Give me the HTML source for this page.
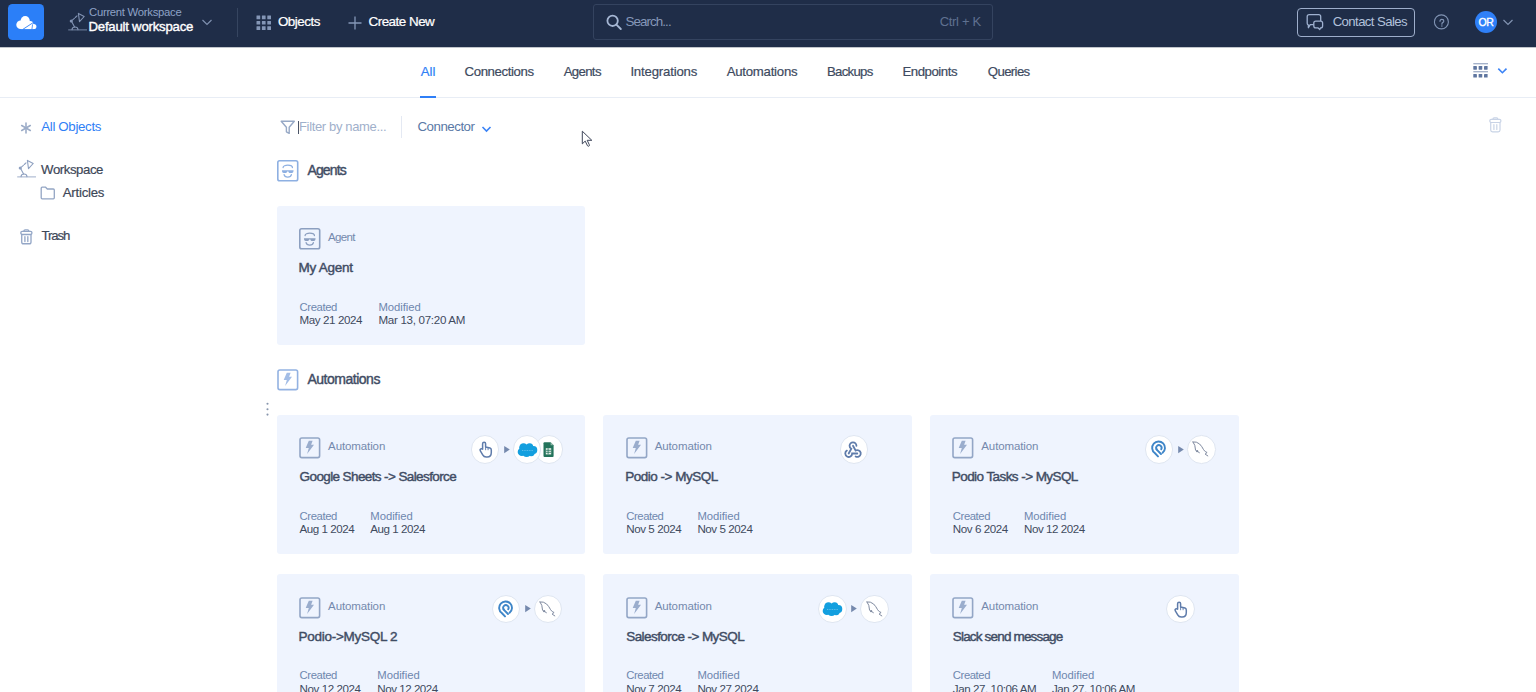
<!DOCTYPE html>
<html><head><meta charset="utf-8"><style>
html,body{margin:0;padding:0;}
body{width:1536px;height:692px;overflow:hidden;position:relative;background:#fff;font-family:"Liberation Sans", sans-serif;}
.a{position:absolute;box-sizing:border-box;}
svg.a{overflow:visible}
.t{position:absolute;white-space:pre;}
#top{position:absolute;left:0;top:0;width:1536px;height:47px;background:#1f2d48;}
</style></head><body>
<div id="top"></div><div class="a" style="left:0;top:47px;width:1536px;height:1px;background:rgba(31,45,72,0.28)"></div>
<div class="a" style="left:8px;top:4px;width:36px;height:36px;border-radius:4.5px;background:#2b7ff8"></div>
<svg class="a" style="left:8px;top:4px;" width="36" height="36" viewBox="0 0 36 36"><g fill="#fff"><circle cx="12.6" cy="20.7" r="4.3"/><circle cx="17.2" cy="16.7" r="4.6"/><circle cx="22" cy="20.3" r="3.3"/><circle cx="25.8" cy="22.5" r="2.6"/><rect x="12.6" y="20" width="13.2" height="5.1"/></g>
<path d="M14.8 25.4 L25.2 18.6" stroke="#2b7ff8" stroke-width="0.9"/><path d="M24.6 20.3 L23.9 25.4" stroke="#2b7ff8" stroke-width="0.8"/></svg>
<svg class="a" style="left:64px;top:8px;transform:scale(1.0);transform-origin:0 0" width="24" height="24" viewBox="0 0 24 24"><g fill="none" stroke="#8293b3" stroke-width="1.1" stroke-linecap="round" stroke-linejoin="round">
<path d="M4.6 21.9 H22.6" stroke-width="0.85"/><path d="M8 21.6 Q8.2 19 11 19 Q13.8 19 14 21.6"/><path d="M10.6 19 L7.6 13.6"/><path d="M8.6 11.9 L10.4 10.3 M11.3 9.5 L13 7.9"/>
<path d="M14.4 5.4 L20.2 8.5 L15.5 13.7 Z"/></g><circle cx="7.3" cy="13" r="1.6" fill="#8293b3"/></svg>
<svg class="a" style="left:201px;top:18px;" width="12" height="9" viewBox="0 0 12 9"><path d="M1.5 2 L6 6.5 L10.5 2" fill="none" stroke="#7f90af" stroke-width="1.2"/></svg>
<div class="a" style="left:237px;top:8px;width:1px;height:29px;background:#364560"></div>
<svg class="a" style="left:255.6px;top:14.6px;" width="15" height="15" viewBox="0 0 15 15"><rect x="0.5" y="0.5" width="3.7" height="3.7" rx="0.3" fill="#8496b6"/><rect x="0.5" y="5.9" width="3.7" height="3.7" rx="0.3" fill="#8496b6"/><rect x="0.5" y="11.3" width="3.7" height="3.7" rx="0.3" fill="#8496b6"/><rect x="5.9" y="0.5" width="3.7" height="3.7" rx="0.3" fill="#8496b6"/><rect x="5.9" y="5.9" width="3.7" height="3.7" rx="0.3" fill="#8496b6"/><rect x="5.9" y="11.3" width="3.7" height="3.7" rx="0.3" fill="#8496b6"/><rect x="11.3" y="0.5" width="3.7" height="3.7" rx="0.3" fill="#8496b6"/><rect x="11.3" y="5.9" width="3.7" height="3.7" rx="0.3" fill="#8496b6"/><rect x="11.3" y="11.3" width="3.7" height="3.7" rx="0.3" fill="#8496b6"/></svg>
<svg class="a" style="left:347.5px;top:15.5px;" width="14" height="14" viewBox="0 0 14 14"><path d="M7 0.5 V13.5 M0.5 7 H13.5" stroke="#8597b7" stroke-width="1.3"/></svg>
<div class="a" style="left:593px;top:4px;width:400px;height:36px;border:1px solid #34435f;border-radius:3px"></div>
<svg class="a" style="left:606px;top:14px;" width="16" height="16" viewBox="0 0 16 16"><circle cx="6.6" cy="6.8" r="5.2" fill="none" stroke="#a6b7d4" stroke-width="1.8"/><path d="M10.4 10.6 L14.8 15" stroke="#a6b7d4" stroke-width="1.9" stroke-linecap="round"/></svg>
<div class="a" style="left:1297px;top:8px;width:118px;height:29px;border:1px solid #9eaecb;border-radius:4px"></div>
<svg class="a" style="left:1302px;top:10px;" width="26" height="24" viewBox="0 0 26 24"><g fill="none" stroke="#9fb1d0" stroke-width="1.3" stroke-linejoin="round">
<path d="M11.8 14.6 H8.2 L6.4 17.8 L6.3 14.8 Q5.2 14.6 5.2 13.2 V6.6 Q5.2 4.6 7.2 4.6 H16.7 Q18.7 4.6 18.7 6.6 V11.1"/>
<path d="M13.8 11.1 H18.6 Q20.6 11.1 20.6 13.1 V15.9 Q20.6 17.8 18.6 17.8 L17.8 19.6 L15.8 17.8 H13.8 Q11.8 17.8 11.8 15.9 V13.1 Q11.8 11.1 13.8 11.1 Z"/></g></svg>
<svg class="a" style="left:1433px;top:14px;" width="17" height="17" viewBox="0 0 17 17"><circle cx="8.4" cy="7.9" r="7" fill="none" stroke="#8194b4" stroke-width="1.1"/><path d="M7 7.3 Q7 5.3 8.9 5.3 Q10.8 5.3 10.8 7 Q10.8 8.1 9.7 8.6 Q8.9 9 8.9 9.9 V10.2" fill="none" stroke="#8194b4" stroke-width="1.2" stroke-linecap="round"/><circle cx="8.9" cy="11.9" r="0.75" fill="#8194b4"/></svg>
<div class="a" style="left:1475px;top:11px;width:22px;height:22px;border-radius:50%;background:#2f80f8"></div>
<div class="t" style="left:1475px;top:11px;width:22px;height:22px;line-height:22px;text-align:center;font-size:10.5px;font-weight:400;color:#fff;letter-spacing:-0.4px;-webkit-text-stroke:0.35px #fff">OR</div>
<svg class="a" style="left:1502px;top:18px;" width="12" height="9" viewBox="0 0 12 9"><path d="M1.5 2 L6 6.5 L10.5 2" fill="none" stroke="#8293b2" stroke-width="1.2"/></svg>
<div class="a" style="left:0;top:97px;width:1536px;height:1px;background:#e8edf5"></div>
<div class="a" style="left:420px;top:96.3px;width:16px;height:2px;background:#2f7ff7"></div>
<svg class="a" style="left:1473px;top:63px;" width="16" height="16" viewBox="0 0 16 16"><g fill="#5f76a0"><rect x="0.30" y="3.1" width="3.6" height="3.6" rx="0.4"/><rect x="0.30" y="11" width="3.6" height="3.6" rx="0.4"/><rect x="5.65" y="3.1" width="3.6" height="3.6" rx="0.4"/><rect x="5.65" y="11" width="3.6" height="3.6" rx="0.4"/><rect x="11.00" y="3.1" width="3.6" height="3.6" rx="0.4"/><rect x="11.00" y="11" width="3.6" height="3.6" rx="0.4"/></g><rect x="0.3" y="0.2" width="14.7" height="1.1" fill="#8fa0bd"/><rect x="0.3" y="8.2" width="14.7" height="1.1" fill="#8fa0bd"/></svg>
<svg class="a" style="left:1497px;top:67px;" width="11" height="8" viewBox="0 0 11 8"><path d="M1.3 1.6 L5.4 5.7 L9.5 1.6" fill="none" stroke="#3b83f6" stroke-width="1.6"/></svg>
<svg class="a" style="left:1488.6px;top:116.8px;" width="14" height="17" viewBox="0 0 14 17"><g fill="none" stroke="#c8d3e6" stroke-width="1.3" stroke-linejoin="round" stroke-linecap="round" transform="scale(0.91 0.93)">
<path d="M4.3 2.3 Q4.3 0.9 5.7 0.9 H8.3 Q9.7 0.9 9.7 2.3"/><rect x="0.9" y="2.5" width="12.2" height="3.4" rx="1.5"/>
<path d="M1.9 6 V13.9 Q1.9 15.9 3.9 15.9 H10.1 Q12.1 15.9 12.1 13.9 V6"/><path d="M5.4 8.3 V13.4 M8.6 8.3 V13.4"/></g></svg>
<svg class="a" style="left:20px;top:121.5px;" width="12" height="12" viewBox="0 0 12 12"><g stroke="#9dadc8" stroke-width="1.6" stroke-linecap="round"><path d="M6 1 V11"/><path d="M1.7 3.5 L10.3 8.5"/><path d="M1.7 8.5 L10.3 3.5"/></g></svg>
<svg class="a" style="left:12.6px;top:155.3px;transform:scale(1.0);transform-origin:0 0" width="24" height="24" viewBox="0 0 24 24"><g fill="none" stroke="#8ea0c0" stroke-width="1.1" stroke-linecap="round" stroke-linejoin="round">
<path d="M4.6 21.9 H22.6" stroke-width="0.85"/><path d="M8 21.6 Q8.2 19 11 19 Q13.8 19 14 21.6"/><path d="M10.6 19 L7.6 13.6"/><path d="M8.6 11.9 L10.4 10.3 M11.3 9.5 L13 7.9"/>
<path d="M14.4 5.4 L20.2 8.5 L15.5 13.7 Z"/></g><circle cx="7.3" cy="13" r="1.6" fill="#8ea0c0"/></svg>
<svg class="a" style="left:40px;top:186px;" width="16" height="14" viewBox="0 0 16 14"><path d="M1.2 2.2 Q1.2 1.2 2.2 1.2 H5.6 L7.3 3 H13.3 Q14.3 3 14.3 4 V11.8 Q14.3 12.8 13.3 12.8 H2.2 Q1.2 12.8 1.2 11.8 Z" fill="none" stroke="#93a5c4" stroke-width="1.3" stroke-linejoin="round"/></svg>
<svg class="a" style="left:19.8px;top:228.7px;" width="14" height="17" viewBox="0 0 14 17"><g fill="none" stroke="#93a6c6" stroke-width="1.45" stroke-linejoin="round" stroke-linecap="round" transform="scale(0.91 0.93)">
<path d="M4.3 2.3 Q4.3 0.9 5.7 0.9 H8.3 Q9.7 0.9 9.7 2.3"/><rect x="0.9" y="2.5" width="12.2" height="3.4" rx="1.5"/>
<path d="M1.9 6 V13.9 Q1.9 15.9 3.9 15.9 H10.1 Q12.1 15.9 12.1 13.9 V6"/><path d="M5.4 8.3 V13.4 M8.6 8.3 V13.4"/></g></svg>
<svg class="a" style="left:279.5px;top:120px;" width="16" height="15" viewBox="0 0 16 15"><path d="M1.2 1.2 H14.3 L9.2 7.2 V13.4 L6.4 11.8 V7.2 Z" fill="none" stroke="#97a9c6" stroke-width="1.4" stroke-linejoin="round"/></svg>
<div class="a" style="left:298.3px;top:121px;width:1.2px;height:13px;background:#4a5467"></div>
<div class="a" style="left:400.6px;top:116px;width:1px;height:22px;background:#e4e9f3"></div>
<svg class="a" style="left:481px;top:124.5px;" width="11" height="9" viewBox="0 0 11 9"><path d="M1.5 2 L5.5 6 L9.5 2" fill="none" stroke="#3b83f6" stroke-width="1.6"/></svg>
<svg class="a" style="left:581px;top:129.5px;" width="14" height="18" viewBox="0 0 14 18"><path d="M1.3 1.2 V13.9 L4.2 11.1 L6.5 15.8 Q7.3 16.6 8.1 16 Q8.7 15.5 8.3 14.7 L6.2 10.3 L10.8 10.3 Z" fill="#fff" stroke="#3e4559" stroke-width="1" stroke-linejoin="round"/></svg>
<svg class="a" style="left:265.5px;top:402px;" width="3" height="14" viewBox="0 0 3 14"><g fill="#8896ad"><circle cx="1.5" cy="1.7" r="1.05"/><circle cx="1.5" cy="7.2" r="1.05"/><circle cx="1.5" cy="12.6" r="1.05"/></g></svg>
<svg class="a" style="left:276.8px;top:160.2px;" width="22" height="22" viewBox="0 0 22 22"><rect x="0.8" y="0.8" width="19.9" height="19.9" rx="1.8" fill="none" stroke="#8eb0e2" stroke-width="1.6"/>
<g fill="none" stroke="#8eb0e2" stroke-width="1.3" stroke-linecap="round"><path d="M6.1 7.6 C6.1 4.3 15.4 4.3 15.4 7.6"/><path d="M7.1 14.7 Q7.6 17.2 10.75 17.2 Q13.9 17.2 14.4 14.7"/></g>
<path d="M4.9 10.2 H16.6 L16.3 12 Q15.9 13.1 14.7 13.1 H12.7 Q11.8 13.1 11.4 11.6 H10.1 Q9.7 13.1 8.8 13.1 H6.8 Q5.6 13.1 5.2 12 Z" fill="#8eb0e2"/></svg>
<svg class="a" style="left:276.8px;top:368.6px;" width="22" height="22" viewBox="0 0 22 22"><rect x="1.0" y="1.0" width="19.6" height="19.6" rx="1.8" fill="none" stroke="#93b2e2" stroke-width="1.6"/>
<path d="M9.8 3.8 H13.6 L12.1 7.7 H15 L8.1 17 L9.8 11 H6.7 Z" fill="#a3bde6"/></svg>
<div class="a" style="left:276.6px;top:205.6px;width:308.8px;height:139.6px;border-radius:3px;background:#eff4fe"></div>
<svg class="a" style="left:299.20000000000005px;top:228.2px;" width="22" height="22" viewBox="0 0 22 22"><rect x="0.8" y="0.8" width="19.9" height="19.9" rx="1.8" fill="none" stroke="#8c9fc0" stroke-width="1.6"/>
<g fill="none" stroke="#8c9fc0" stroke-width="1.3" stroke-linecap="round"><path d="M6.1 7.6 C6.1 4.3 15.4 4.3 15.4 7.6"/><path d="M7.1 14.7 Q7.6 17.2 10.75 17.2 Q13.9 17.2 14.4 14.7"/></g>
<path d="M4.9 10.2 H16.6 L16.3 12 Q15.9 13.1 14.7 13.1 H12.7 Q11.8 13.1 11.4 11.6 H10.1 Q9.7 13.1 8.8 13.1 H6.8 Q5.6 13.1 5.2 12 Z" fill="#8c9fc0"/></svg>
<div class="a" style="left:276.6px;top:414.6px;width:308.8px;height:139.6px;border-radius:3px;background:#eff4fe"></div>
<svg class="a" style="left:299.20000000000005px;top:437.20000000000005px;" width="22" height="22" viewBox="0 0 22 22"><rect x="1.0" y="1.0" width="19.6" height="19.6" rx="1.8" fill="none" stroke="#93a6c6" stroke-width="1.6"/>
<path d="M9.8 3.8 H13.6 L12.1 7.7 H15 L8.1 17 L9.8 11 H6.7 Z" fill="#9aadcd"/></svg>
<div class="a" style="left:534.5px;top:435.0px;width:28.6px;height:28.6px;border-radius:50%;background:#fff;border:1px solid #dfe6f1"></div><svg class="a" style="left:543.0000000000001px;top:441.5px;" width="11" height="16" viewBox="0 0 11 16"><path d="M0.5 1.3 Q0.5 0.3 1.5 0.3 H7.6 L10.6 3.3 V14.1 Q10.6 15.1 9.6 15.1 H1.5 Q0.5 15.1 0.5 14.1 Z" fill="#23735b"/><path d="M7.6 0.3 V3.3 H10.6 Z" fill="#8fb8a9"/>
<rect x="2.8" y="6.2" width="5.4" height="6.2" fill="#e8f0ec"/><path d="M2.8 8.3 H8.2 M2.8 10.3 H8.2 M5.1 6.2 V12.4" stroke="#23735b" stroke-width="0.8"/></svg>
<div class="a" style="left:512.5px;top:435.0px;width:28.6px;height:28.6px;border-radius:50%;background:#fff;border:1px solid #dfe6f1"></div><svg class="a" style="left:517.0000000000001px;top:441.8px;" width="21" height="15" viewBox="0 0 21 15"><g fill="#139fdf"><circle cx="6.5" cy="5.5" r="4.3"/><circle cx="12.6" cy="4.9" r="3.6"/><circle cx="16.4" cy="8" r="3.9"/><circle cx="4.9" cy="9.9" r="4.2"/><circle cx="9.6" cy="11" r="3.9"/><circle cx="14.2" cy="10.6" r="3.6"/></g><path d="M5 8.6 H16" stroke="#fff" stroke-width="0.6" stroke-dasharray="1 0.7" opacity="0.6"/></svg>
<svg class="a" style="left:503.9000000000001px;top:445.7px;" width="6" height="7.2" viewBox="0 0 6 7.2"><path d="M0.2 0 L5.8 3.6 L0.2 7.2 Z" fill="#7589ad"/></svg>
<div class="a" style="left:470.8px;top:435.0px;width:28.6px;height:28.6px;border-radius:50%;background:#fff;border:1px solid #dfe6f1"></div><svg class="a" style="left:477.6000000000001px;top:441.3px;" width="16" height="16" viewBox="0 0 16 16"><path d="M4.6 8.2 V2.8 Q4.6 1.3 6.1 1.3 Q7.6 1.3 7.6 2.8 V6 L12 7 Q13.3 7.4 13.3 9 V11.5 Q13.3 16 9.2 16 H8.2 Q5.9 16 4.7 13.8 L2.2 9.7 Q1.7 8.5 2.7 8 Q3.7 7.6 4.6 8.2 Z" fill="none" stroke="#5f7cab" stroke-width="1.5" stroke-linejoin="round"/><path d="M7.6 6 V9.2 M10.1 6.6 V9.2" stroke="#5f7cab" stroke-width="0.9"/></svg>
<div class="a" style="left:603.2px;top:414.6px;width:308.8px;height:139.6px;border-radius:3px;background:#eff4fe"></div>
<svg class="a" style="left:625.8000000000001px;top:437.20000000000005px;" width="22" height="22" viewBox="0 0 22 22"><rect x="1.0" y="1.0" width="19.6" height="19.6" rx="1.8" fill="none" stroke="#93a6c6" stroke-width="1.6"/>
<path d="M9.8 3.8 H13.6 L12.1 7.7 H15 L8.1 17 L9.8 11 H6.7 Z" fill="#9aadcd"/></svg>
<div class="a" style="left:839.6px;top:435.0px;width:28.6px;height:28.6px;border-radius:50%;background:#fff;border:1px solid #dfe6f1"></div><svg class="a" style="left:844.4px;top:440.3px;" width="18" height="18" viewBox="0 0 18 18"><g fill="none" stroke="#5f7cab" stroke-width="2.1" stroke-linecap="round" transform="translate(9 9.2) scale(0.86) translate(-12 -12)">
<path d="M4.876 13.61a4 4 0 1 0 6.124 3.39h6"/><path d="M15.066 20.502a4 4 0 1 0 1.934 -7.502c-.706 0 -1.424 .179 -2 .5l-3 -5.5"/><path d="M16 8a4 4 0 1 0 -8 0c0 1.506 .77 2.818 2 3.5l-3 5.5"/></g></svg>
<div class="a" style="left:929.8px;top:414.6px;width:308.8px;height:139.6px;border-radius:3px;background:#eff4fe"></div>
<svg class="a" style="left:952.4px;top:437.20000000000005px;" width="22" height="22" viewBox="0 0 22 22"><rect x="1.0" y="1.0" width="19.6" height="19.6" rx="1.8" fill="none" stroke="#93a6c6" stroke-width="1.6"/>
<path d="M9.8 3.8 H13.6 L12.1 7.7 H15 L8.1 17 L9.8 11 H6.7 Z" fill="#9aadcd"/></svg>
<div class="a" style="left:1187.0px;top:435.0px;width:28.6px;height:28.6px;border-radius:50%;background:#fff;border:1px solid #dfe6f1"></div><svg class="a" style="left:1192.3px;top:440.3px;" width="18" height="18" viewBox="0 0 18 18"><g fill="none" stroke="#7f8aa0" stroke-width="1" stroke-linecap="round" stroke-linejoin="round">
<path d="M1 1.9 Q4.5 1.3 7.6 4 Q10 6.5 11.6 9.7 Q13 12 15.1 12.5 L13.1 14.1 L15.8 15.9"/><path d="M1 1.9 Q3.4 4.5 3.6 10.2"/><path d="M5.1 11.2 L7.4 12.7"/></g><circle cx="5.1" cy="11.2" r="1.15" fill="#7f8aa0"/></svg>
<svg class="a" style="left:1178.0px;top:445.7px;" width="6" height="7.2" viewBox="0 0 6 7.2"><path d="M0.2 0 L5.8 3.6 L0.2 7.2 Z" fill="#7589ad"/></svg>
<div class="a" style="left:1144.9px;top:435.0px;width:28.6px;height:28.6px;border-radius:50%;background:#fff;border:1px solid #dfe6f1"></div><svg class="a" style="left:1150.1999999999998px;top:440.3px;" width="18" height="18" viewBox="0 0 18 18"><g fill="none" stroke="#3f86c8" stroke-width="1.9" stroke-linecap="round">
<path d="M12.6 12.8 A6.4 6.4 0 1 0 4.8 13 L8 16.4"/><path d="M11.3 10.5 L6.3 15.2" stroke-width="0"/><path d="M6.7 9.4 A2.7 2.7 0 1 1 11.2 9.2"/><path d="M6.5 9.4 L11 14"/></g></svg>
<div class="a" style="left:276.6px;top:574.2px;width:308.8px;height:139.6px;border-radius:3px;background:#eff4fe"></div>
<svg class="a" style="left:299.20000000000005px;top:596.8000000000001px;" width="22" height="22" viewBox="0 0 22 22"><rect x="1.0" y="1.0" width="19.6" height="19.6" rx="1.8" fill="none" stroke="#93a6c6" stroke-width="1.6"/>
<path d="M9.8 3.8 H13.6 L12.1 7.7 H15 L8.1 17 L9.8 11 H6.7 Z" fill="#9aadcd"/></svg>
<div class="a" style="left:533.8px;top:594.6px;width:28.6px;height:28.6px;border-radius:50%;background:#fff;border:1px solid #dfe6f1"></div><svg class="a" style="left:539.1000000000001px;top:599.9000000000001px;" width="18" height="18" viewBox="0 0 18 18"><g fill="none" stroke="#7f8aa0" stroke-width="1" stroke-linecap="round" stroke-linejoin="round">
<path d="M1 1.9 Q4.5 1.3 7.6 4 Q10 6.5 11.6 9.7 Q13 12 15.1 12.5 L13.1 14.1 L15.8 15.9"/><path d="M1 1.9 Q3.4 4.5 3.6 10.2"/><path d="M5.1 11.2 L7.4 12.7"/></g><circle cx="5.1" cy="11.2" r="1.15" fill="#7f8aa0"/></svg>
<svg class="a" style="left:524.8000000000001px;top:605.3000000000001px;" width="6" height="7.2" viewBox="0 0 6 7.2"><path d="M0.2 0 L5.8 3.6 L0.2 7.2 Z" fill="#7589ad"/></svg>
<div class="a" style="left:491.7px;top:594.6px;width:28.6px;height:28.6px;border-radius:50%;background:#fff;border:1px solid #dfe6f1"></div><svg class="a" style="left:497.0000000000001px;top:599.9000000000001px;" width="18" height="18" viewBox="0 0 18 18"><g fill="none" stroke="#3f86c8" stroke-width="1.9" stroke-linecap="round">
<path d="M12.6 12.8 A6.4 6.4 0 1 0 4.8 13 L8 16.4"/><path d="M11.3 10.5 L6.3 15.2" stroke-width="0"/><path d="M6.7 9.4 A2.7 2.7 0 1 1 11.2 9.2"/><path d="M6.5 9.4 L11 14"/></g></svg>
<div class="a" style="left:603.2px;top:574.2px;width:308.8px;height:139.6px;border-radius:3px;background:#eff4fe"></div>
<svg class="a" style="left:625.8000000000001px;top:596.8000000000001px;" width="22" height="22" viewBox="0 0 22 22"><rect x="1.0" y="1.0" width="19.6" height="19.6" rx="1.8" fill="none" stroke="#93a6c6" stroke-width="1.6"/>
<path d="M9.8 3.8 H13.6 L12.1 7.7 H15 L8.1 17 L9.8 11 H6.7 Z" fill="#9aadcd"/></svg>
<div class="a" style="left:860.4px;top:594.6px;width:28.6px;height:28.6px;border-radius:50%;background:#fff;border:1px solid #dfe6f1"></div><svg class="a" style="left:865.7px;top:599.9000000000001px;" width="18" height="18" viewBox="0 0 18 18"><g fill="none" stroke="#7f8aa0" stroke-width="1" stroke-linecap="round" stroke-linejoin="round">
<path d="M1 1.9 Q4.5 1.3 7.6 4 Q10 6.5 11.6 9.7 Q13 12 15.1 12.5 L13.1 14.1 L15.8 15.9"/><path d="M1 1.9 Q3.4 4.5 3.6 10.2"/><path d="M5.1 11.2 L7.4 12.7"/></g><circle cx="5.1" cy="11.2" r="1.15" fill="#7f8aa0"/></svg>
<svg class="a" style="left:851.4px;top:605.3000000000001px;" width="6" height="7.2" viewBox="0 0 6 7.2"><path d="M0.2 0 L5.8 3.6 L0.2 7.2 Z" fill="#7589ad"/></svg>
<div class="a" style="left:818.3px;top:594.6px;width:28.6px;height:28.6px;border-radius:50%;background:#fff;border:1px solid #dfe6f1"></div><svg class="a" style="left:822.1px;top:601.4000000000001px;" width="21" height="15" viewBox="0 0 21 15"><g fill="#139fdf"><circle cx="6.5" cy="5.5" r="4.3"/><circle cx="12.6" cy="4.9" r="3.6"/><circle cx="16.4" cy="8" r="3.9"/><circle cx="4.9" cy="9.9" r="4.2"/><circle cx="9.6" cy="11" r="3.9"/><circle cx="14.2" cy="10.6" r="3.6"/></g><path d="M5 8.6 H16" stroke="#fff" stroke-width="0.6" stroke-dasharray="1 0.7" opacity="0.6"/></svg>
<div class="a" style="left:929.8px;top:574.2px;width:308.8px;height:139.6px;border-radius:3px;background:#eff4fe"></div>
<svg class="a" style="left:952.4px;top:596.8000000000001px;" width="22" height="22" viewBox="0 0 22 22"><rect x="1.0" y="1.0" width="19.6" height="19.6" rx="1.8" fill="none" stroke="#93a6c6" stroke-width="1.6"/>
<path d="M9.8 3.8 H13.6 L12.1 7.7 H15 L8.1 17 L9.8 11 H6.7 Z" fill="#9aadcd"/></svg>
<div class="a" style="left:1166.2px;top:594.6px;width:28.6px;height:28.6px;border-radius:50%;background:#fff;border:1px solid #dfe6f1"></div><svg class="a" style="left:1172.5px;top:600.9000000000001px;" width="16" height="16" viewBox="0 0 16 16"><path d="M4.6 8.2 V2.8 Q4.6 1.3 6.1 1.3 Q7.6 1.3 7.6 2.8 V6 L12 7 Q13.3 7.4 13.3 9 V11.5 Q13.3 16 9.2 16 H8.2 Q5.9 16 4.7 13.8 L2.2 9.7 Q1.7 8.5 2.7 8 Q3.7 7.6 4.6 8.2 Z" fill="none" stroke="#5f7cab" stroke-width="1.5" stroke-linejoin="round"/><path d="M7.6 6 V9.2 M10.1 6.6 V9.2" stroke="#5f7cab" stroke-width="0.9"/></svg>
<div class="t" style="left:89.00px;top:7.23px;font-size:11.3px;line-height:11.3px;font-weight:400;color:#8ea2c6;letter-spacing:-0.276px;">Current Workspace</div>
<div class="t" style="left:88.50px;top:20.03px;font-size:13.2px;line-height:13.2px;font-weight:400;color:#ffffff;letter-spacing:-0.228px;-webkit-text-stroke:0.38px #fff;">Default workspace</div>
<div class="t" style="left:277.90px;top:14.76px;font-size:13.4px;line-height:13.4px;font-weight:400;color:#ffffff;letter-spacing:-0.483px;-webkit-text-stroke:0.22px #fff;">Objects</div>
<div class="t" style="left:368.50px;top:14.56px;font-size:13.4px;line-height:13.4px;font-weight:400;color:#ffffff;letter-spacing:-0.492px;-webkit-text-stroke:0.22px #fff;">Create New</div>
<div class="t" style="left:625.40px;top:14.56px;font-size:13.4px;line-height:13.4px;font-weight:400;color:#8597b8;letter-spacing:-0.921px;">Search...</div>
<div class="t" style="left:939.70px;top:15.30px;font-size:13px;line-height:13px;font-weight:400;color:#5f7190;letter-spacing:-0.319px;">Ctrl + K</div>
<div class="t" style="left:1332.70px;top:14.73px;font-size:13.2px;line-height:13.2px;font-weight:400;color:#b2c1db;letter-spacing:-0.601px;">Contact Sales</div>
<div class="t" style="left:420.80px;top:64.63px;font-size:13.2px;line-height:13.2px;font-weight:400;color:#2f80f6;letter-spacing:-0.063px;-webkit-text-stroke:0.2px #2f80f6;">All</div>
<div class="t" style="left:464.60px;top:64.63px;font-size:13.2px;line-height:13.2px;font-weight:400;color:#3d4a60;letter-spacing:-0.392px;-webkit-text-stroke:0.2px #3d4a60;">Connections</div>
<div class="t" style="left:563.70px;top:64.63px;font-size:13.2px;line-height:13.2px;font-weight:400;color:#3d4a60;letter-spacing:-0.653px;-webkit-text-stroke:0.2px #3d4a60;">Agents</div>
<div class="t" style="left:630.40px;top:64.63px;font-size:13.2px;line-height:13.2px;font-weight:400;color:#3d4a60;letter-spacing:-0.184px;-webkit-text-stroke:0.2px #3d4a60;">Integrations</div>
<div class="t" style="left:726.70px;top:64.63px;font-size:13.2px;line-height:13.2px;font-weight:400;color:#3d4a60;letter-spacing:-0.241px;-webkit-text-stroke:0.2px #3d4a60;">Automations</div>
<div class="t" style="left:827.00px;top:64.63px;font-size:13.2px;line-height:13.2px;font-weight:400;color:#3d4a60;letter-spacing:-0.706px;-webkit-text-stroke:0.2px #3d4a60;">Backups</div>
<div class="t" style="left:902.40px;top:64.63px;font-size:13.2px;line-height:13.2px;font-weight:400;color:#3d4a60;letter-spacing:-0.433px;-webkit-text-stroke:0.2px #3d4a60;">Endpoints</div>
<div class="t" style="left:987.80px;top:64.63px;font-size:13.2px;line-height:13.2px;font-weight:400;color:#3d4a60;letter-spacing:-0.630px;-webkit-text-stroke:0.2px #3d4a60;">Queries</div>
<div class="t" style="left:41.25px;top:120.44px;font-size:13.3px;line-height:13.3px;font-weight:400;color:#2f80f6;letter-spacing:-0.340px;">All Objects</div>
<div class="t" style="left:41.10px;top:162.53px;font-size:13.2px;line-height:13.2px;font-weight:400;color:#3d4758;letter-spacing:-0.423px;-webkit-text-stroke:0.2px #3d4758;">Workspace</div>
<div class="t" style="left:62.80px;top:185.93px;font-size:13.2px;line-height:13.2px;font-weight:400;color:#3d4758;letter-spacing:-0.234px;-webkit-text-stroke:0.2px #3d4758;">Articles</div>
<div class="t" style="left:41.50px;top:229.23px;font-size:13.2px;line-height:13.2px;font-weight:400;color:#3d4758;letter-spacing:-1.096px;-webkit-text-stroke:0.2px #3d4758;">Trash</div>
<div class="t" style="left:299.00px;top:120.30px;font-size:13px;line-height:13px;font-weight:400;color:#9fb0cb;letter-spacing:-0.349px;">Filter by name...</div>
<div class="t" style="left:417.50px;top:120.34px;font-size:13.3px;line-height:13.3px;font-weight:400;color:#5a79a6;letter-spacing:-0.490px;">Connector</div>
<div class="t" style="left:307.40px;top:163.25px;font-size:14px;line-height:14px;font-weight:400;color:#3f4c64;letter-spacing:-0.837px;-webkit-text-stroke:0.42px #3f4c64;">Agents</div>
<div class="t" style="left:307.40px;top:372.25px;font-size:14px;line-height:14px;font-weight:400;color:#3f4c64;letter-spacing:-0.482px;-webkit-text-stroke:0.42px #3f4c64;">Automations</div>
<div class="t" style="left:328.10px;top:232.17px;font-size:11.5px;line-height:11.5px;font-weight:400;color:#7489ad;letter-spacing:-0.664px;">Agent</div>
<div class="t" style="left:298.60px;top:261.47px;font-size:13.5px;line-height:13.5px;font-weight:400;color:#3f4c64;letter-spacing:-0.282px;-webkit-text-stroke:0.42px #3f4c64;">My Agent</div>
<div class="t" style="left:299.60px;top:301.63px;font-size:11.3px;line-height:11.3px;font-weight:400;color:#6e87ae;letter-spacing:-0.418px;">Created</div>
<div class="t" style="left:299.60px;top:314.18px;font-size:11.6px;line-height:11.6px;font-weight:400;color:#3f4b5e;letter-spacing:-0.418px;">May 21 2024</div>
<div class="t" style="left:378.40px;top:301.63px;font-size:11.3px;line-height:11.3px;font-weight:400;color:#6e87ae;letter-spacing:-0.045px;">Modified</div>
<div class="t" style="left:378.40px;top:314.18px;font-size:11.6px;line-height:11.6px;font-weight:400;color:#3f4b5e;letter-spacing:-0.299px;">Mar 13, 07:20 AM</div>
<div class="t" style="left:328.10px;top:441.17px;font-size:11.5px;line-height:11.5px;font-weight:400;color:#7489ad;letter-spacing:-0.109px;">Automation</div>
<div class="t" style="left:299.60px;top:470.47px;font-size:13.5px;line-height:13.5px;font-weight:400;color:#3f4c64;letter-spacing:-0.610px;-webkit-text-stroke:0.42px #3f4c64;">Google Sheets -&gt; Salesforce</div>
<div class="t" style="left:299.60px;top:510.63px;font-size:11.3px;line-height:11.3px;font-weight:400;color:#6e87ae;letter-spacing:-0.418px;">Created</div>
<div class="t" style="left:299.60px;top:523.18px;font-size:11.6px;line-height:11.6px;font-weight:400;color:#3f4b5e;letter-spacing:-0.474px;">Aug 1 2024</div>
<div class="t" style="left:370.30px;top:510.63px;font-size:11.3px;line-height:11.3px;font-weight:400;color:#6e87ae;letter-spacing:-0.045px;">Modified</div>
<div class="t" style="left:370.30px;top:523.18px;font-size:11.6px;line-height:11.6px;font-weight:400;color:#3f4b5e;letter-spacing:-0.463px;">Aug 1 2024</div>
<div class="t" style="left:654.70px;top:441.17px;font-size:11.5px;line-height:11.5px;font-weight:400;color:#7489ad;letter-spacing:-0.109px;">Automation</div>
<div class="t" style="left:625.20px;top:470.47px;font-size:13.5px;line-height:13.5px;font-weight:400;color:#3f4c64;letter-spacing:-0.493px;-webkit-text-stroke:0.42px #3f4c64;">Podio -&gt; MySQL</div>
<div class="t" style="left:626.20px;top:510.63px;font-size:11.3px;line-height:11.3px;font-weight:400;color:#6e87ae;letter-spacing:-0.418px;">Created</div>
<div class="t" style="left:626.20px;top:523.18px;font-size:11.6px;line-height:11.6px;font-weight:400;color:#3f4b5e;letter-spacing:-0.428px;">Nov 5 2024</div>
<div class="t" style="left:697.40px;top:510.63px;font-size:11.3px;line-height:11.3px;font-weight:400;color:#6e87ae;letter-spacing:-0.045px;">Modified</div>
<div class="t" style="left:697.40px;top:523.18px;font-size:11.6px;line-height:11.6px;font-weight:400;color:#3f4b5e;letter-spacing:-0.428px;">Nov 5 2024</div>
<div class="t" style="left:981.30px;top:441.17px;font-size:11.5px;line-height:11.5px;font-weight:400;color:#7489ad;letter-spacing:-0.109px;">Automation</div>
<div class="t" style="left:951.80px;top:470.47px;font-size:13.5px;line-height:13.5px;font-weight:400;color:#3f4c64;letter-spacing:-0.572px;-webkit-text-stroke:0.42px #3f4c64;">Podio Tasks -&gt; MySQL</div>
<div class="t" style="left:952.80px;top:510.63px;font-size:11.3px;line-height:11.3px;font-weight:400;color:#6e87ae;letter-spacing:-0.418px;">Created</div>
<div class="t" style="left:952.80px;top:523.18px;font-size:11.6px;line-height:11.6px;font-weight:400;color:#3f4b5e;letter-spacing:-0.428px;">Nov 6 2024</div>
<div class="t" style="left:1024.00px;top:510.63px;font-size:11.3px;line-height:11.3px;font-weight:400;color:#6e87ae;letter-spacing:-0.045px;">Modified</div>
<div class="t" style="left:1024.00px;top:523.18px;font-size:11.6px;line-height:11.6px;font-weight:400;color:#3f4b5e;letter-spacing:-0.450px;">Nov 12 2024</div>
<div class="t" style="left:328.10px;top:600.77px;font-size:11.5px;line-height:11.5px;font-weight:400;color:#7489ad;letter-spacing:-0.109px;">Automation</div>
<div class="t" style="left:298.60px;top:630.07px;font-size:13.5px;line-height:13.5px;font-weight:400;color:#3f4c64;letter-spacing:-0.282px;-webkit-text-stroke:0.42px #3f4c64;">Podio-&gt;MySQL 2</div>
<div class="t" style="left:299.60px;top:670.23px;font-size:11.3px;line-height:11.3px;font-weight:400;color:#6e87ae;letter-spacing:-0.418px;">Created</div>
<div class="t" style="left:299.60px;top:682.78px;font-size:11.6px;line-height:11.6px;font-weight:400;color:#3f4b5e;letter-spacing:-0.450px;">Nov 12 2024</div>
<div class="t" style="left:377.30px;top:670.23px;font-size:11.3px;line-height:11.3px;font-weight:400;color:#6e87ae;letter-spacing:-0.045px;">Modified</div>
<div class="t" style="left:377.30px;top:682.78px;font-size:11.6px;line-height:11.6px;font-weight:400;color:#3f4b5e;letter-spacing:-0.480px;">Nov 12 2024</div>
<div class="t" style="left:654.70px;top:600.77px;font-size:11.5px;line-height:11.5px;font-weight:400;color:#7489ad;letter-spacing:-0.109px;">Automation</div>
<div class="t" style="left:626.20px;top:630.07px;font-size:13.5px;line-height:13.5px;font-weight:400;color:#3f4c64;letter-spacing:-0.565px;-webkit-text-stroke:0.42px #3f4c64;">Salesforce -&gt; MySQL</div>
<div class="t" style="left:626.20px;top:670.23px;font-size:11.3px;line-height:11.3px;font-weight:400;color:#6e87ae;letter-spacing:-0.418px;">Created</div>
<div class="t" style="left:626.20px;top:682.78px;font-size:11.6px;line-height:11.6px;font-weight:400;color:#3f4b5e;letter-spacing:-0.428px;">Nov 7 2024</div>
<div class="t" style="left:697.40px;top:670.23px;font-size:11.3px;line-height:11.3px;font-weight:400;color:#6e87ae;letter-spacing:-0.045px;">Modified</div>
<div class="t" style="left:697.40px;top:682.78px;font-size:11.6px;line-height:11.6px;font-weight:400;color:#3f4b5e;letter-spacing:-0.430px;">Nov 27 2024</div>
<div class="t" style="left:981.30px;top:600.77px;font-size:11.5px;line-height:11.5px;font-weight:400;color:#7489ad;letter-spacing:-0.109px;">Automation</div>
<div class="t" style="left:952.80px;top:630.07px;font-size:13.5px;line-height:13.5px;font-weight:400;color:#3f4c64;letter-spacing:-0.827px;-webkit-text-stroke:0.42px #3f4c64;">Slack send message</div>
<div class="t" style="left:952.80px;top:670.23px;font-size:11.3px;line-height:11.3px;font-weight:400;color:#6e87ae;letter-spacing:-0.418px;">Created</div>
<div class="t" style="left:952.80px;top:682.78px;font-size:11.6px;line-height:11.6px;font-weight:400;color:#3f4b5e;letter-spacing:-0.428px;">Jan 27, 10:06 AM</div>
<div class="t" style="left:1052.00px;top:670.23px;font-size:11.3px;line-height:11.3px;font-weight:400;color:#6e87ae;letter-spacing:-0.045px;">Modified</div>
<div class="t" style="left:1052.00px;top:682.78px;font-size:11.6px;line-height:11.6px;font-weight:400;color:#3f4b5e;letter-spacing:-0.461px;">Jan 27, 10:06 AM</div>
</body></html>
